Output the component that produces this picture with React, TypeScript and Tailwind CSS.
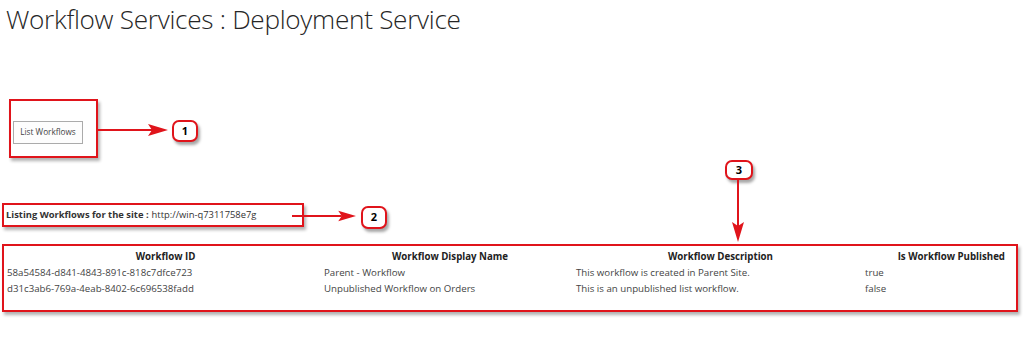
import React from "react";

const rows = [
  {
    id: "58a54584-d841-4843-891c-818c7dfce723",
    name: "Parent - Workflow",
    desc: "This workflow is created in Parent Site.",
    published: "true",
  },
  {
    id: "d31c3ab6-769a-4eab-8402-6c696538fadd",
    name: "Unpublished Workflow on Orders",
    desc: "This is an unpublished list workflow.",
    published: "false",
  },
];

function Badge({ n, className }: { n: string; className: string }) {
  return (
    <div
      className={`absolute flex items-center justify-center rounded-[7px] border-2 border-[#e0141b] bg-white text-[11px] font-bold text-black shadow-[2px_3px_3px_rgba(0,0,0,0.35)] ${className}`}
    >
      {n}
    </div>
  );
}

function ArrowRight({ className }: { className: string }) {
  return (
    <svg className={`absolute ${className}`} width="72" height="16" viewBox="0 0 72 16">
      <line x1="0" y1="8" x2="56" y2="8" stroke="#e0141b" strokeWidth="2" />
      <polygon points="52,2 72,8 52,14 56,8" fill="#e0141b" />
    </svg>
  );
}

export default function App() {
  return (
    <div className="relative h-[344px] w-[1024px] overflow-hidden bg-white font-['Open_Sans','Liberation_Sans',sans-serif] text-[#444]">
      <h1 className="pl-[6px] pt-[1px] text-[26.2px] font-light leading-[36px] tracking-[-0.3px] text-[#262626]">
        Workflow Services : Deployment Service
      </h1>

      {/* step 1 */}
      <div className="ml-[9px] mt-[62px] h-[59px] w-[89px] border-2 border-[#e0141b] pl-[2px] pt-[16px] shadow-[2px_3px_3px_rgba(0,0,0,0.3)]">
        <button className="h-[23px] w-[70px] border border-[#ababab] bg-[#fdfdfd] text-[8.2px] text-[#444]">
          List Workflows
        </button>
      </div>

      {/* step 2 */}
      <div className="ml-[2px] mt-[45px] flex h-[24px] w-[302px] items-center border-2 border-[#e0141b] pl-[2px] text-[9.4px] text-[#333] shadow-[2px_3px_3px_rgba(0,0,0,0.3)]">
        <span className="font-bold">Listing Workflows for the site :</span>
        <span className="ml-[3px]">http://win-q7311758e7g</span>
      </div>

      {/* step 3 */}
      <div className="ml-[2px] mt-[17px] h-[68px] w-[1016px] border-2 border-[#e0141b] pt-[3px] text-[9.7px] shadow-[2px_3px_3px_rgba(0,0,0,0.3)]">
        <div className="grid grid-cols-[317px_252px_289px_140px] pl-[3px] leading-[16px]">
          <div className="text-center font-bold text-[#222]">Workflow ID</div>
          <div className="text-center font-bold text-[#222]">Workflow Display Name</div>
          <div className="text-center font-bold text-[#222]">Workflow Description</div>
          <div className="text-right font-bold text-[#222]">Is Workflow Published</div>
          {rows.map((r) => (
            <React.Fragment key={r.id}>
              <div>{r.id}</div>
              <div>{r.name}</div>
              <div>{r.desc}</div>
              <div>{r.published}</div>
            </React.Fragment>
          ))}
        </div>
      </div>

      <ArrowRight className="left-[96px] top-[122px]" />
      <Badge n="1" className="left-[172px] top-[120px] h-[22px] w-[26px]" />

      <ArrowRight className="left-[292px] top-[208px] w-[64px]" />
      <Badge n="2" className="left-[361px] top-[206px] h-[23px] w-[26px]" />

      <Badge n="3" className="left-[725px] top-[160px] h-[20px] w-[28px]" />
      <svg className="absolute left-[730px] top-[180px]" width="16" height="62" viewBox="0 0 16 62">
        <line x1="8" y1="0" x2="8" y2="46" stroke="#e0141b" strokeWidth="2" />
        <polygon points="2,42 8,62 14,42 8,46" fill="#e0141b" />
      </svg>
    </div>
  );
}
